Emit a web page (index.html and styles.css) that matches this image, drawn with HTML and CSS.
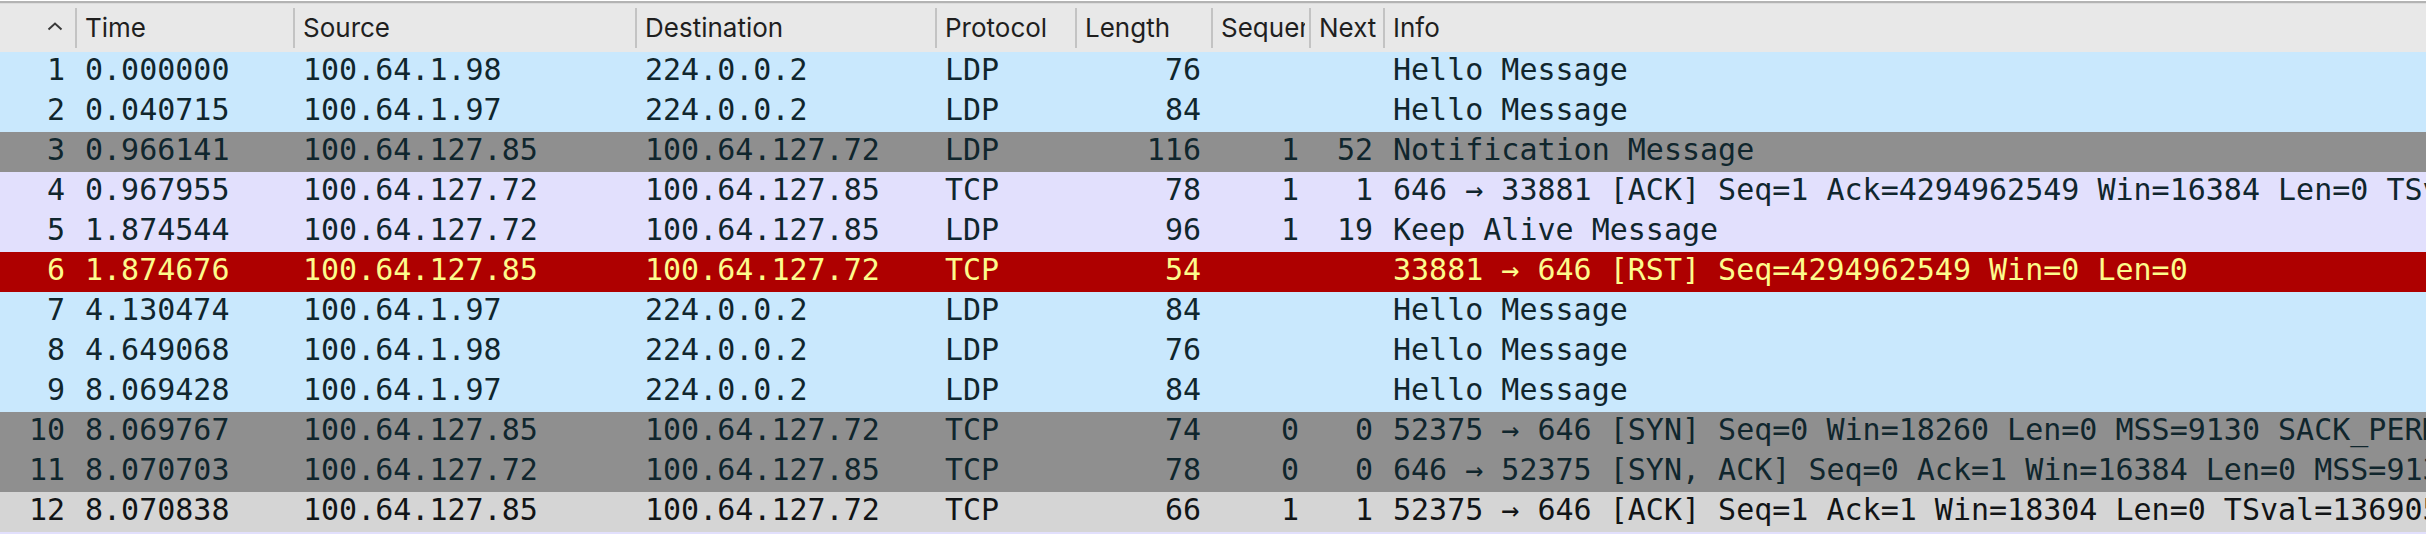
FILE: index.html
```html
<!DOCTYPE html>
<html>
<head>
<meta charset="utf-8">
<link rel="stylesheet" href="styles.css">
</head>
<body>
<div class="packets">
  <div class="row head">
    <div class="hc no"><svg class="sort" width="16" height="9" viewBox="0 0 16 9"><polyline points="1.5,7.5 8,1.5 14.5,7.5" fill="none" stroke="#3a3a3a" stroke-width="2"/></svg></div>
    <div class="hc sep"><span class="ht">Time</span></div>
    <div class="hc sep"><span class="ht">Source</span></div>
    <div class="hc sep"><span class="ht">Destination</span></div>
    <div class="hc sep"><span class="ht">Protocol</span></div>
    <div class="hc sep"><span class="ht">Length</span></div>
    <div class="hc sep"><span class="ht">Sequence</span></div>
    <div class="hc sep"><span class="ht">Next</span></div>
    <div class="hc sep"><span class="ht">Info</span></div>
  </div>

  <div class="row udp"><div class="c r">1</div><div class="c">0.000000</div><div class="c">100.64.1.98</div><div class="c">224.0.0.2</div><div class="c">LDP</div><div class="c r">76</div><div class="c r"></div><div class="c r"></div><div class="c info">Hello Message</div></div>
  <div class="row udp"><div class="c r">2</div><div class="c">0.040715</div><div class="c">100.64.1.97</div><div class="c">224.0.0.2</div><div class="c">LDP</div><div class="c r">84</div><div class="c r"></div><div class="c r"></div><div class="c info">Hello Message</div></div>
  <div class="row synfin"><div class="c r">3</div><div class="c">0.966141</div><div class="c">100.64.127.85</div><div class="c">100.64.127.72</div><div class="c">LDP</div><div class="c r">116</div><div class="c r">1</div><div class="c r">52</div><div class="c info">Notification Message</div></div>
  <div class="row tcp"><div class="c r">4</div><div class="c">0.967955</div><div class="c">100.64.127.72</div><div class="c">100.64.127.85</div><div class="c">TCP</div><div class="c r">78</div><div class="c r">1</div><div class="c r">1</div><div class="c info">646 → 33881 [ACK] Seq=1 Ack=4294962549 Win=16384 Len=0 TSval=1369054128 TSecr=1369052251</div></div>
  <div class="row tcp"><div class="c r">5</div><div class="c">1.874544</div><div class="c">100.64.127.72</div><div class="c">100.64.127.85</div><div class="c">LDP</div><div class="c r">96</div><div class="c r">1</div><div class="c r">19</div><div class="c info">Keep Alive Message</div></div>
  <div class="row rst"><div class="c r">6</div><div class="c">1.874676</div><div class="c">100.64.127.85</div><div class="c">100.64.127.72</div><div class="c">TCP</div><div class="c r">54</div><div class="c r"></div><div class="c r"></div><div class="c info">33881 → 646 [RST] Seq=4294962549 Win=0 Len=0</div></div>
  <div class="row udp"><div class="c r">7</div><div class="c">4.130474</div><div class="c">100.64.1.97</div><div class="c">224.0.0.2</div><div class="c">LDP</div><div class="c r">84</div><div class="c r"></div><div class="c r"></div><div class="c info">Hello Message</div></div>
  <div class="row udp"><div class="c r">8</div><div class="c">4.649068</div><div class="c">100.64.1.98</div><div class="c">224.0.0.2</div><div class="c">LDP</div><div class="c r">76</div><div class="c r"></div><div class="c r"></div><div class="c info">Hello Message</div></div>
  <div class="row udp"><div class="c r">9</div><div class="c">8.069428</div><div class="c">100.64.1.97</div><div class="c">224.0.0.2</div><div class="c">LDP</div><div class="c r">84</div><div class="c r"></div><div class="c r"></div><div class="c info">Hello Message</div></div>
  <div class="row synfin"><div class="c r">10</div><div class="c">8.069767</div><div class="c">100.64.127.85</div><div class="c">100.64.127.72</div><div class="c">TCP</div><div class="c r">74</div><div class="c r">0</div><div class="c r">0</div><div class="c info">52375 → 646 [SYN] Seq=0 Win=18260 Len=0 MSS=9130 SACK_PERM TSval=1369059474 TSecr=0 WS=128</div></div>
  <div class="row synfin"><div class="c r">11</div><div class="c">8.070703</div><div class="c">100.64.127.72</div><div class="c">100.64.127.85</div><div class="c">TCP</div><div class="c r">78</div><div class="c r">0</div><div class="c r">0</div><div class="c info">646 → 52375 [SYN, ACK] Seq=0 Ack=1 Win=16384 Len=0 MSS=9130 WS=1 SACK_PERM</div></div>
  <div class="row plain"><div class="c r">12</div><div class="c">8.070838</div><div class="c">100.64.127.85</div><div class="c">100.64.127.72</div><div class="c">TCP</div><div class="c r">66</div><div class="c r">1</div><div class="c r">1</div><div class="c info">52375 → 646 [ACK] Seq=1 Ack=1 Win=18304 Len=0 TSval=1369059475 TSecr=1369056329</div></div>
  <div class="row tcp"><div class="c r">13</div><div class="c">8.071022</div><div class="c">100.64.127.85</div><div class="c">100.64.127.72</div><div class="c">LDP</div><div class="c r">100</div><div class="c r">1</div><div class="c r">35</div><div class="c info">Initialization Message</div></div>
</div>
</body>
</html>
```

FILE: styles.css
```css
html, body {
  margin: 0;
  padding: 0;
  background: #ffffff;
  overflow: hidden;
}

.packets {
  width: 2426px;
  overflow: hidden;
}

.row {
  display: grid;
  grid-template-columns: 75px 218px 342px 300px 140px 136px 98px 74px 1fr;
  height: 40px;
}

.head {
  height: 49px;
  background: #e8e8e8;
  border-top: 2px solid #b3b3b3;
  box-shadow: inset 0 1px 0 #dcdcdc;
  margin-top: 1px;
  font-family: Inter, "Liberation Sans", sans-serif;
  font-size: 26px;
  color: #1f1f1f;
}

.hc {
  display: flex;
  align-items: center;
  padding: 0 4px 0 10px;
  white-space: nowrap;
  min-width: 0;
}

.ht {
  display: block;
  min-width: 0;
  overflow: hidden;
  white-space: nowrap;
}

.hc.sep {
  background: linear-gradient(#c3c3c3, #c3c3c3) no-repeat 0 5px / 2px 40px;
}

.hc.no {
  justify-content: flex-end;
  padding: 0 12px 2px 0;
}

.sort {
  display: block;
}

.c {
  font-family: "DejaVu Sans Mono", "Liberation Mono", monospace;
  font-size: 30px;
  line-height: 36px;
  padding: 0 10px 4px 10px;
  white-space: pre;
  overflow: hidden;
}

.c.r {
  text-align: right;
}

.c.info {
  overflow: visible;
}

.udp { background: #c9e8fd; color: #10262d; }
.tcp { background: #e2e0fd; color: #10262d; }
.synfin { background: #8f8f8f; color: #10262d; }
.rst { background: #ae0000; color: #fdfb8c; }
.plain { background: #d5d5d5; color: #111416; }
```
